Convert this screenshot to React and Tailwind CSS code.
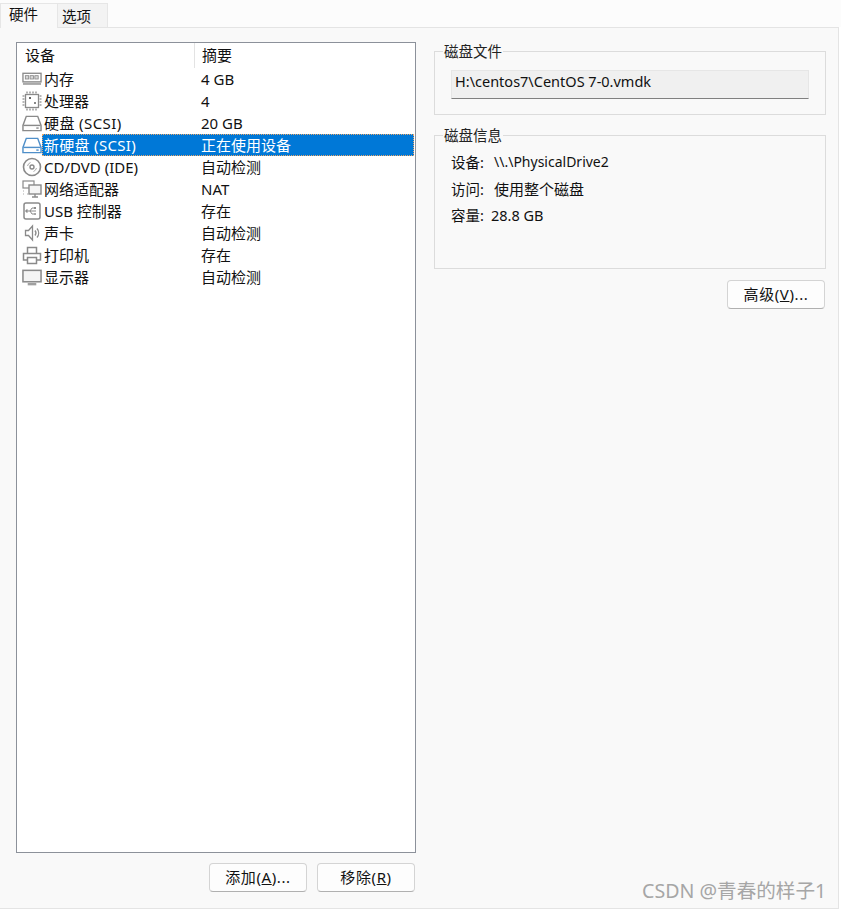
import React from "react";

const S = { fill: "none", stroke: "#8a8a8a", strokeWidth: 1 };

const Memory = () => (
  <svg width="21" height="14" viewBox="0 0 21 14" {...S}>
    <rect x="1" y="1" width="19" height="9" strokeWidth="1.4" />
    <rect x="3.500" y="3.500" width="3.500" height="3.500" stroke="#8a8a8a" fill="#d8d8d8" strokeWidth="0.9" />
    <rect x="8.500" y="3.500" width="3.500" height="3.500" stroke="#8a8a8a" fill="#d8d8d8" strokeWidth="0.9" />
    <rect x="13.500" y="3.500" width="3.500" height="3.500" stroke="#8a8a8a" fill="#d8d8d8" strokeWidth="0.9" />
    <path d="M1 12h19" strokeWidth="2.400" stroke="#a8a8a8" />
  </svg>
);
const Cpu = () => (
  <svg width="20" height="20" viewBox="0 0 20 20" {...S}>
    <rect x="3.500" y="3.500" width="13" height="13" strokeWidth="1.300" />
    <path d="M5 .5v2M8 .5v2M11 .5v2M14 .5v2M5 17.500v2M8 17.500v2M11 17.500v2M14 17.500v2M.5 5h2M.5 8h2M.5 11h2M.5 14h2M17.500 5h2M17.500 8h2M17.500 11h2M17.500 14h2" strokeWidth="1.600" stroke="#a0a0a0" />
    <rect x="7" y="6" width="2" height="2" fill="#666" stroke="none" />
    <rect x="12" y="11" width="2" height="2" fill="#888" stroke="none" />
  </svg>
);
const Disk = ({ color = "#8a8a8a" }) => (
  <svg width="21" height="17" viewBox="0 0 21 17" fill="none" stroke={color} strokeWidth="1.500">
    <path d="M4.500 1h12l3.500 9.500V16H1v-5.500z" />
    <path d="M1.500 10.500h18" />
    <path d="M15 13.300h2.500" />
  </svg>
);
const Cd = () => (
  <svg width="20" height="20" viewBox="0 0 20 20" {...S}>
    <circle cx="10" cy="10" r="8.500" strokeWidth="1.600" />
    <circle cx="10" cy="10" r="2" strokeWidth="1.400" />
    <path d="M5.500 9a5 5 0 0 1 3-3.500M14.500 11a5 5 0 0 1-3 3.500" stroke="#aaa" />
  </svg>
);
const Net = () => (
  <svg width="20" height="19" viewBox="0 0 20 19" {...S}>
    <rect x="1" y="1" width="11" height="7" strokeWidth="1.200" />
    <rect x="7" y="5" width="12" height="9" fill="#f5f5f5" strokeWidth="1.400" />
    <path d="M13 14v3M10 17h6" strokeWidth="1.400" />
    <path d="M1 11h2M1 14h2M5 14h2" stroke="#aaa" strokeDasharray="1 1" />
  </svg>
);
const Usb = () => (
  <svg width="18" height="18" viewBox="0 0 18 18" fill="none" stroke="#8a8a8a">
    <rect x="1" y="1" width="16" height="16" rx="2" strokeWidth="1.500" />
    <path d="M4 9h9M7 9l2-3h2M7 9l2 3h2" />
    <path d="M4 7.500v3l-1.500-1.500z" fill="#8a8a8a" />
    <rect x="11" y="5" width="2" height="2" fill="#8a8a8a" stroke="none" />
    <circle cx="12" cy="12" r="1" fill="#8a8a8a" stroke="none" />
  </svg>
);
const Speaker = () => (
  <svg width="16" height="18" viewBox="0 0 16 18" fill="none" stroke="#8a8a8a" strokeWidth="1.300">
    <path d="M1.500 6.500h3l4-4.500v14l-4-4.500h-3z" />
    <path d="M11 6.500a4 4 0 0 1 0 5M13 4.500a7 7 0 0 1 0 9" />
  </svg>
);
const Printer = () => (
  <svg width="20" height="19" viewBox="0 0 20 19" fill="none" stroke="#8a8a8a" strokeWidth="1.500">
    <path d="M5.500 7V1.500h9V7" />
    <path d="M5 14H1.500V7.500h17V14H15" />
    <path d="M5.500 11.500h9v6h-9z" />
  </svg>
);
const Monitor = () => (
  <svg width="21" height="17" viewBox="0 0 21 17" fill="none" stroke="#8a8a8a">
    <rect x="1" y="1" width="19" height="12" strokeWidth="1.600" fill="#f4f4f4" />
    <path d="M6 15.500h9" strokeWidth="2.500" stroke="#a0a0a0" />
  </svg>
);

const rows = [
  [Memory, "内存", "4 GB"],
  [Cpu, "处理器", "4"],
  [Disk, "硬盘 (SCSI)", "20 GB", false, "tracking-[0.4px]"],
  [Disk, "新硬盘 (SCSI)", "正在使用设备", true, "tracking-[0.3px]"],
  [Cd, "CD/DVD (IDE)", "自动检测"],
  [Net, "网络适配器", "NAT"],
  [Usb, "USB 控制器", "存在"],
  [Speaker, "声卡", "自动检测"],
  [Printer, "打印机", "存在"],
  [Monitor, "显示器", "自动检测"],
];

const Btn = ({ children }) => (
  <button className="w-[98px] h-[29px] rounded-[4px] border border-[#d4d4d4] border-b-[#b0b0b0] bg-[#fdfdfd] text-[15px] tracking-[0.6px] text-[#111] flex items-center justify-center leading-none">
    {children}
  </button>
);

const Group = ({ title, h, children }) => (
  <fieldset className={`${h} border border-[#dcdcdc] m-0 p-0 min-w-0`}>
    <legend className="ml-[8px] px-[1px] text-[14.5px] leading-[18px] text-[#222]">{title}</legend>
    {children}
  </fieldset>
);

export default function App() {
  return (
    <div className="relative w-[841px] h-[910px] bg-white flex flex-col text-[15px] text-[#111]" style={{ fontFamily: '"Noto Sans", "Noto Sans CJK SC", sans-serif' }}>
      <div className="h-[27px] flex items-end bg-[#fcfcfc]">
        <div className="w-[58px] h-[25px] -mb-px z-10 bg-[#f9f9f9] border border-b-0 border-[#e6e6e6] pl-[8px] leading-[20px] text-[14.5px]">硬件</div>
        <div className="w-[50px] h-[24px] bg-[#f3f3f3] border border-b-0 border-l-0 border-[#e6e6e6] pl-[4px] leading-[24px] text-[14.5px]">选项</div>
      </div>
      <div className="w-[839px] h-[882px] bg-[#f9f9f9] border-t border-r border-b border-[#e4e4e4] flex">
        <div className="w-[434px] shrink-0 pl-[16px] pt-[14px] flex flex-col">
          <div className="w-[400px] h-[811px] bg-white border border-[#8c919a] flex flex-col">
            <div className="h-[25px] shrink-0 flex items-center leading-none">
              <div className="w-[178px] h-full pl-[8px] flex items-center border-r border-[#e3e3e3]">设备</div>
              <div className="pl-[7px]">摘要</div>
            </div>
            {rows.map(([Icon, a, b, sel, track]) => (
              <div key={a} className={`h-[22px] shrink-0 flex items-center ${sel ? "text-white" : ""}`}>
                <div className="w-[25px] shrink-0 flex items-center justify-center pl-[5px]">
                  <Icon color={sel ? "#4f8fc9" : undefined} />
                </div>
                <div className={`flex-1 flex items-center h-full mr-[1px] ${sel ? "bg-[#0078d7] outline outline-dotted outline-[#e9a76a] -outline-offset-1" : ""}`}>
                  <div className={`w-[159px] pl-[2px] whitespace-nowrap ${track || ""}`}>{a}</div>
                  <div className="whitespace-nowrap">{b}</div>
                </div>
              </div>
            ))}
          </div>
          <div className="flex justify-end gap-[10px] mt-[10px] pr-[19px]">
            <Btn>添加(<u>A</u>)...</Btn>
            <Btn>移除(<u>R</u>)</Btn>
          </div>
        </div>
        <div className="w-[392px] flex flex-col pt-[14px]">
          <Group title="磁盘文件" h="h-[73px]">
            <div className="mx-[16px] mt-[10px] h-[29px] bg-[#f0f0f0] border border-[#e6e6e6] border-b-[#808080] pl-[3px] leading-[20px] text-[14.5px]">H:\centos7\CentOS 7-0.vmdk</div>
          </Group>
          <Group title="磁盘信息" h="h-[143px] mt-[11px]">
            <div className="pl-[16px] pt-[9px] flex flex-col gap-[9px] leading-[18px] text-[14.5px]">
              <div className="flex"><span className="w-[43px]">设备:</span><span className="text-[14px]">\\.\PhysicalDrive2</span></div>
              <div className="flex"><span className="w-[43px]">访问:</span><span className="text-[15px]">使用整个磁盘</span></div>
              <div className="flex -mt-px"><span className="w-[40px]">容量:</span><span className="text-[14.5px]">28.8 GB</span></div>
            </div>
          </Group>
          <div className="flex justify-end mt-[11px] pr-[1px]">
            <Btn>高级(<u>V</u>)...</Btn>
          </div>
        </div>
      </div>
      <div className="absolute left-[642px] top-[880px] text-[19.6px] leading-[22px] text-[#a6a6a6] whitespace-nowrap">CSDN @青春的样子1</div>
    </div>
  );
}
